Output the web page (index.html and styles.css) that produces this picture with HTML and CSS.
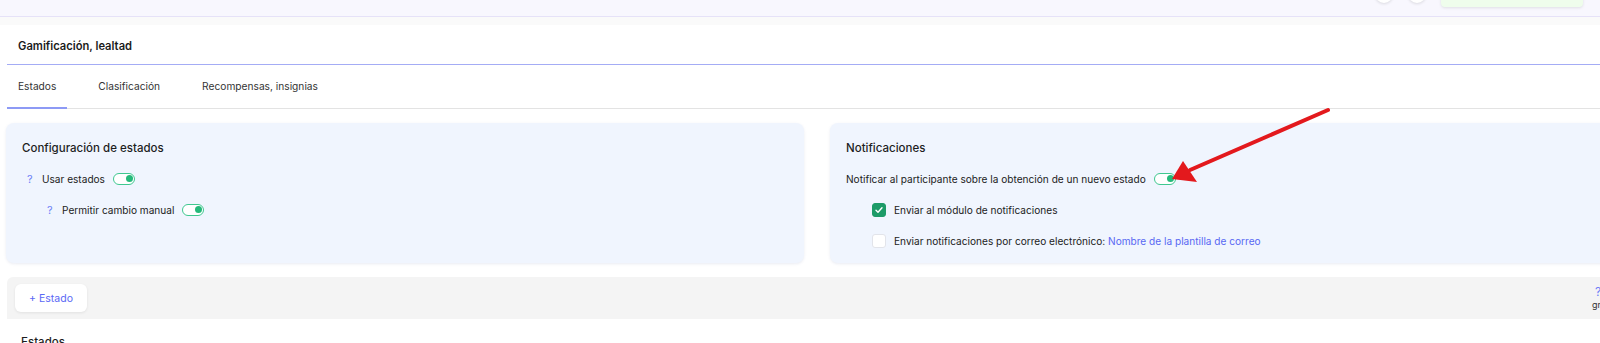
FILE: index.html
```html
<!DOCTYPE html>
<html lang="es">
<head>
    <meta charset="UTF-8">
    <meta name="viewport" content="width=device-width, initial-scale=1.0">
    <title>Gamificación, lealtad</title>
    <link rel="stylesheet" href="styles.css">
</head>
<body>
    <div class="topbar">
        <div class="topbar-actions">
            <span class="round-btn"></span>
            <span class="round-btn"></span>
            <span class="balance-box"></span>
        </div>
    </div>
    <div class="subband"></div>

    <div class="page">
        <div class="page-header">
            <h1>Gamificación, lealtad</h1>
        </div>

        <div class="tabs">
            <div class="tab active">Estados</div>
            <div class="tab">Clasificación</div>
            <div class="tab">Recompensas, insignias</div>
        </div>

        <div class="cards">
            <div class="card">
                <h2>Configuración de estados</h2>
                <div class="row">
                    <span class="help">?</span>
                    <span>Usar estados</span>
                    <span class="toggle on"></span>
                </div>
                <div class="row nested">
                    <span class="help">?</span>
                    <span>Permitir cambio manual</span>
                    <span class="toggle on"></span>
                </div>
            </div>

            <div class="card">
                <h2>Notificaciones</h2>
                <div class="row">
                    <span>Notificar al participante sobre la obtención de un nuevo estado</span>
                    <span class="toggle on"></span>
                </div>
                <div class="row check-row">
                    <span class="checkbox checked">
                        <svg width="10" height="10" viewBox="0 0 10 10"><path d="M2 5.2l2 2 4-4.4" fill="none" stroke="#fff" stroke-width="1.4" stroke-linecap="round" stroke-linejoin="round"/></svg>
                    </span>
                    <span>Enviar al módulo de notificaciones</span>
                </div>
                <div class="row check-row">
                    <span class="checkbox"></span>
                    <span>Enviar notificaciones por correo electrónico: <a href="#" class="link">Nombre de la plantilla de correo</a></span>
                </div>
            </div>
        </div>

        <div class="toolbar">
            <button class="add-btn">+ Estado</button>
            <div class="toolbar-right">
                <span class="help">?</span>
                <span class="group-label">gr</span>
            </div>
        </div>

        <div class="list">
            <h2>Estados</h2>
        </div>
    </div>

    <svg class="annotation" width="1600" height="343" viewBox="0 0 1600 343">
        <line x1="1328" y1="110" x2="1190" y2="170" stroke="#e3191d" stroke-width="4" stroke-linecap="round"/>
        <polygon points="1172,179 1183,161 1197,182" fill="#e3191d"/>
    </svg>
</body>
</html>
```

FILE: styles.css
```css
* {
    margin: 0;
    padding: 0;
    box-sizing: border-box;
}

body {
    font-family: Inter, 'Noto Sans', sans-serif;
    font-size: 10px;
    color: #222;
    background-color: #fff;
    overflow: hidden;
    width: 1600px;
    height: 343px;
    position: relative;
}

.topbar {
    height: 17px;
    background-color: #f8f7fe;
    border-bottom: 1px solid #e6e2f8;
    display: flex;
    justify-content: flex-end;
}

.topbar-actions {
    display: flex;
    align-items: flex-end;
    padding-right: 17px;
    height: 16px;
}

.round-btn {
    width: 18px;
    height: 18px;
    border-radius: 50%;
    background-color: #fff;
    box-shadow: 0 1px 3px rgba(0, 0, 0, 0.12);
    margin-right: 15px;
    margin-bottom: 13px;
}

.balance-box {
    width: 142px;
    height: 24px;
    background-color: #effdec;
    border-radius: 4px;
    box-shadow: 0 1px 3px rgba(0, 0, 0, 0.1);
    margin-bottom: 9px;
}

.subband {
    height: 8px;
    background-color: #fafafa;
}

.page {
    padding-left: 6px;
}

.page-header {
    height: 40px;
    margin-left: 1px;
    padding-left: 11px;
    border-bottom: 1px solid #a4acf5;
    display: flex;
    align-items: center;
}

.page-header h1 {
    font-size: 11.2px;
    font-weight: 600;
    color: #1b1b1b;
    margin-top: 2px;
}

.tabs {
    display: flex;
    gap: 20px;
    height: 44px;
    margin-left: 1px;
    border-bottom: 1px solid #e3e3e3;
}

.tab {
    padding: 0 11px;
    display: flex;
    align-items: center;
    font-size: 10.2px;
    color: #333;
    margin-bottom: -1px;
    border-bottom: 2px solid transparent;
}

.tab.active {
    border-bottom-color: #8d9af5;
}

.cards {
    display: grid;
    grid-template-columns: 798px 798px;
    gap: 26px;
    margin-top: 14px;
}

.card {
    background-color: #f0f5fe;
    border-radius: 8px;
    box-shadow: 0 1px 3px rgba(80, 100, 160, 0.12);
    padding: 17px 16px 0;
    height: 140px;
}

.card h2 {
    font-size: 11.5px;
    font-weight: 500;
    color: #1e1e1e;
    height: 16px;
    line-height: 16px;
    margin-bottom: 15px;
}

.row {
    display: flex;
    align-items: center;
    gap: 7px;
    height: 16px;
    margin-bottom: 15px;
    font-size: 10.1px;
}

.row.nested {
    padding-left: 20px;
}

.help {
    color: #6f7ff7;
    font-size: 11px;
    width: 8px;
    margin-left: 5px;
}

.toggle {
    width: 22px;
    height: 12px;
    border-radius: 6px;
    border: 1.5px solid #40c890;
    background-color: #fff;
    position: relative;
    margin-left: 1px;
}

.toggle.on::after {
    content: '';
    position: absolute;
    right: 1px;
    top: 1px;
    width: 7px;
    height: 7px;
    border-radius: 50%;
    background-color: #25b97a;
}

.check-row {
    padding-left: 26px;
    gap: 8px;
    height: 15px;
    margin-bottom: 16px;
}

.checkbox {
    width: 14px;
    height: 14px;
    border-radius: 3px;
    background-color: #fff;
    border: 1px solid #e2e4ea;
    display: flex;
    align-items: center;
    justify-content: center;
}

.checkbox.checked {
    background-color: #1d9b68;
    border-color: #1d9b68;
}

.link {
    color: #5868f3;
    text-decoration: none;
}

.toolbar {
    margin-top: 14px;
    margin-left: 1px;
    height: 42px;
    background-color: #f4f4f4;
    border-radius: 6px 0 0 0;
    padding: 7px 0 7px 8px;
    display: flex;
    justify-content: space-between;
}

.add-btn {
    font-family: inherit;
    font-size: 10.5px;
    color: #5a68f5;
    background-color: #fff;
    border: none;
    border-radius: 6px;
    box-shadow: 0 1px 3px rgba(0, 0, 0, 0.08);
    width: 72px;
    height: 28px;
}

.toolbar-right {
    display: flex;
    flex-direction: column;
    align-items: flex-start;
    width: 8px;
    padding-top: 1px;
    line-height: 13px;
}

.toolbar-right .help {
    margin-left: 3px;
    font-size: 12px;
}

.group-label {
    font-size: 9px;
    color: #333;
}

.list {
    padding: 16px 15px 0;
}

.list h2 {
    font-size: 11.5px;
    font-weight: 500;
    color: #1e1e1e;
}

.annotation {
    position: absolute;
    left: 0;
    top: 0;
    pointer-events: none;
}
```
